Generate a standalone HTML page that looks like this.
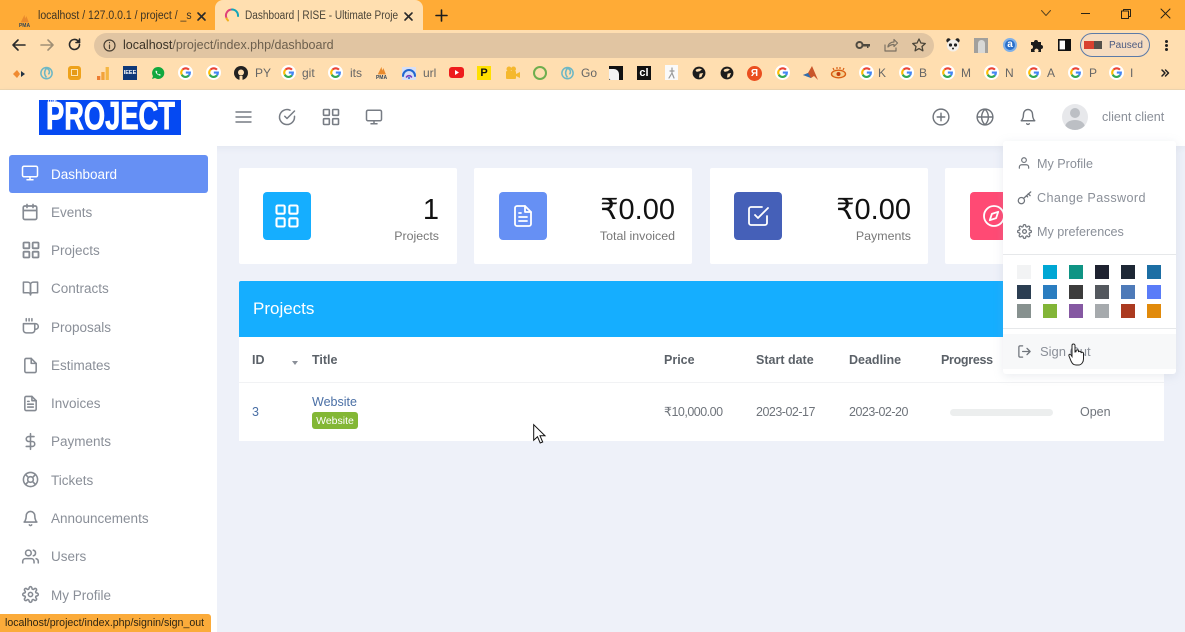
<!DOCTYPE html>
<html><head><meta charset="utf-8"><title>Dashboard | RISE</title>
<style>
*{box-sizing:border-box}
html,body{margin:0;padding:0;width:1185px;height:632px;overflow:hidden;background:#eef1f9}
body{font-family:"Liberation Sans","DejaVu Sans",sans-serif;position:relative}
#w{position:absolute;left:0;top:0;width:1185px;height:632px;overflow:hidden;filter:blur(.35px)}
.a{position:absolute}
.t{position:absolute;white-space:nowrap;line-height:18px}
svg{position:absolute;overflow:visible}
.i{fill:none;stroke-linecap:round;stroke-linejoin:round}
.n{position:absolute;left:51px;color:#8a8f98;font-size:13.5px;line-height:18px;white-space:nowrap;margin-top:1px}
.b{position:absolute;color:#666;font-size:12px;line-height:14px;white-space:nowrap;top:66px}
.s{position:absolute;width:14px;height:14px}
.c{position:absolute;top:168px;height:96px;width:218px;background:#fff;border-radius:2px}
.ic{position:absolute;top:192px;width:48px;height:48px;border-radius:4px}
.v{position:absolute;right:0;font-size:29px;line-height:34px;color:#111;white-space:nowrap}
.l{position:absolute;font-size:12.4px;line-height:16px;color:#777;white-space:nowrap}
.h{position:absolute;top:352px;font-size:12.5px;line-height:16px;font-weight:bold;color:#5b6168;white-space:nowrap}
.d{position:absolute;top:404px;font-size:12.5px;line-height:16px;color:#6f747b;white-space:nowrap}
.m{position:absolute;left:1037px;font-size:12.6px;line-height:16px;color:#8a8f98;white-space:nowrap}
.side{stroke:#858a92;stroke-width:2.2}
</style></head><body><div id="w">
<svg width="0" height="0" style="position:absolute"><defs>
<symbol id="g" viewBox="0 0 24 24"><circle cx="12" cy="12" r="12" fill="#fff"/><path d="M17.5 7.5A7 7 0 0 0 7.2 7.5" fill="none" stroke="#ea4335" stroke-width="3.4"/><path d="M7.2 7.5A7 7 0 0 0 6 15.5" fill="none" stroke="#fbbc05" stroke-width="3.4"/><path d="M6 15.5A7 7 0 0 0 17.5 16.5" fill="none" stroke="#34a853" stroke-width="3.4"/><path d="M17.5 16.5A7 7 0 0 0 19 12H12.5" fill="none" stroke="#4285f4" stroke-width="3.4"/></symbol>
<symbol id="grid" viewBox="0 0 24 24"><rect x="3" y="3" width="7" height="7" rx="1"/><rect x="14" y="3" width="7" height="7" rx="1"/><rect x="3" y="14" width="7" height="7" rx="1"/><rect x="14" y="14" width="7" height="7" rx="1"/></symbol>
<symbol id="mon" viewBox="0 0 24 24"><rect x="2" y="3" width="20" height="14" rx="2"/><path d="M8 21h8M12 17v4"/></symbol>
<symbol id="pma" viewBox="0 0 24 24"><path d="M6 15L12 3l1 6 2-4 4 10z" fill="#e98a2c"/><text x="12" y="22" font-size="8" font-weight="bold" fill="#345" text-anchor="middle" font-family="Liberation Sans">PMA</text></symbol>
<symbol id="earth" viewBox="0 0 24 24"><circle cx="12" cy="12" r="11" fill="#1c1c1c"/><path d="M6 7c4-3 8-3 11-1l-4 3-5 1zM13 13l6-1-3 7-4 1z" fill="#ffdeb0"/></symbol>
<symbol id="swirl" viewBox="0 0 24 24"><circle cx="12" cy="13" r="9" fill="none" stroke="#6cb7c5" stroke-width="2.4"/><path d="M12 5c-4 5-4 10 0 15M12 5c5 2 6 7 3 10" fill="none" stroke="#6cb7c5" stroke-width="2.4"/></symbol>
</defs></svg>

<!-- Chrome tab strip -->
<div class="a" style="left:0;top:0;width:1185px;height:30px;background:#ffab36"></div>
<div class="a" style="left:215px;top:0;width:208px;height:31px;background:#ffdfb0;border-radius:8px 8px 0 0"></div>
<svg style="left:17px;top:13px" width="15" height="15" viewBox="0 0 24 24"><use href="#pma"/></svg>
<div class="t" style="left:38px;top:7px;font-size:11.5px;color:#3c3325;transform:scaleX(.91);transform-origin:0 0">localhost / 127.0.0.1 / project / _s</div>
<svg class="i" style="left:197px;top:12px" width="9" height="9" viewBox="0 0 9 9" stroke="#2a2a2a" stroke-width="1.6"><path d="M1 1l7 7M8 1L1 8"/></svg>
<svg class="i" style="left:225px;top:8px" width="14" height="14" viewBox="0 0 14 14" stroke-width="2"><path d="M1.5 10A6 6 0 0 1 7 1.5" stroke="#e0407a"/><path d="M7 1.5A6 6 0 0 1 13 8" stroke="#12a5b8"/><path d="M1.5 10.5l1.5 2" stroke="#f0b020"/></svg>
<div class="t" style="left:245px;top:7px;font-size:11.5px;color:#4a4438;transform:scaleX(.875);transform-origin:0 0">Dashboard | RISE - Ultimate Proje</div>
<svg class="i" style="left:404px;top:12px" width="9" height="9" viewBox="0 0 9 9" stroke="#2a2a2a" stroke-width="1.6"><path d="M1 1l7 7M8 1L1 8"/></svg>
<svg class="i" style="left:436px;top:10px" width="11" height="11" viewBox="0 0 11 11" stroke="#1d1d1d" stroke-width="1.6"><path d="M5.5 0v11M0 5.5h11"/></svg>
<svg class="i" style="left:1041px;top:10px" width="10" height="6" viewBox="0 0 10 6" stroke="#5a4420" stroke-width="1"><path d="M.5.5L5 5.5 9.5.5"/></svg>
<div class="a" style="left:1081px;top:13px;width:9px;height:1.4px;background:#2a2315"></div>
<svg class="i" style="left:1121px;top:9px" width="10" height="10" viewBox="0 0 10 10" stroke="#2a2315" stroke-width="1"><rect x=".5" y="2" width="7" height="7.5"/><path d="M2.5 2V.5h7v7H7.5"/></svg>
<svg class="i" style="left:1161px;top:9px" width="9" height="9" viewBox="0 0 9 9" stroke="#2a2315" stroke-width="1"><path d="M0 0l9 9M9 0L0 9"/></svg>

<!-- Toolbar -->
<div class="a" style="left:0;top:30px;width:1185px;height:59px;background:#ffdeb0"></div>
<div class="a" style="left:0;top:89px;width:1185px;height:1px;background:#eed5ad"></div>
<svg class="i" style="left:12px;top:39px" width="13" height="12" viewBox="0 0 13 12" stroke="#2a2a2a" stroke-width="1.6"><path d="M13 6H1M6 1L1 6l5 5"/></svg>
<svg class="i" style="left:41px;top:39px" width="13" height="12" viewBox="0 0 13 12" stroke="#a08f75" stroke-width="1.6"><path d="M0 6h12M7 1l5 5-5 5"/></svg>
<svg class="i" style="left:68px;top:38px" width="13" height="13" viewBox="0 0 13 13" stroke="#2a2a2a" stroke-width="1.6"><path d="M11.5 6.5a5 5 0 1 1-1.5-3.6L11.500 4.500"/><path d="M11.5 1v3.500H8" fill="#2a2a2a"/></svg>
<div class="a" style="left:94px;top:33px;width:840px;height:25px;border-radius:13px;background:#e1c5a2"></div>
<svg class="i" style="left:103px;top:39px" width="13" height="13" viewBox="0 0 13 13" stroke="#4a4033" stroke-width="1.2"><circle cx="6.5" cy="6.5" r="5.5"/><path d="M6.5 6v3.5M6.5 3.5v.2"/></svg>
<div class="t" style="left:123px;top:36px;font-size:12.5px;color:#6c5f4d"><span style="color:#3a3226">localhost</span>/project/index.php/dashboard</div>
<svg style="left:856px;top:41px" width="14" height="9" viewBox="0 0 14 9"><circle cx="3.5" cy="4" r="3" fill="none" stroke="#4f4a40" stroke-width="2"/><path d="M6 3h8v2.500h-1.500V7H11V5.500H6z" fill="#4f4a40"/></svg>
<svg class="i" style="left:884px;top:38px" width="14" height="14" viewBox="0 0 14 14" stroke="#7c7263" stroke-width="1.2"><path d="M1 7v6h11v-3"/><path d="M4 9c0-3 3-5 6-5V1.500L13.500 5 10 8.500V6.500C7.500 6.500 5.500 7.500 4 9z"/></svg>
<svg class="i" style="left:912px;top:38px" width="14" height="14" viewBox="0 0 14 14" stroke="#4a4438" stroke-width="1.3"><path d="M7 1l1.900 4 4.400.5-3.300 3 .9 4.300L7 10.600 3.100 12.800 4 8.500 .7 5.500 5.100 5z"/></svg>
<svg style="left:946px;top:38px" width="14" height="14" viewBox="0 0 14 14"><circle cx="2.5" cy="2.5" r="2.2" fill="#222"/><circle cx="11.5" cy="2.5" r="2.2" fill="#222"/><circle cx="7" cy="7.5" r="6" fill="#f4f0ea"/><circle cx="4.5" cy="7" r="1.6" fill="#222"/><circle cx="9.5" cy="7" r="1.6" fill="#222"/><circle cx="7" cy="10.500" r="1" fill="#222"/></svg>
<div class="a" style="left:974px;top:38px;width:14px;height:15px;background:#a2a09c"></div>
<div class="a" style="left:978px;top:40px;width:7px;height:13px;background:#d8d8d6;border-radius:4px 4px 0 0"></div>
<div class="a" style="left:1003px;top:38px;width:14px;height:14px;border-radius:50%;background:#2a6fc9;border:2px solid #7fb0e8;color:#fff;font-size:10px;line-height:10px;text-align:center;font-weight:bold">a</div>
<svg style="left:1030px;top:38px" width="14" height="14" viewBox="0 0 14 14"><path d="M1 4h3a2 2 0 1 1 4 0h3v3a2 2 0 1 1 0 4v3H8a2 2 0 1 0-3 0H1v-3a2 2 0 1 0 0-4z" fill="#1c1c1c"/></svg>
<svg style="left:1058px;top:39px" width="13" height="12" viewBox="0 0 13 12"><rect x=".8" y=".8" width="11.4" height="10.4" fill="#fff" stroke="#111" stroke-width="1.6"/><rect x="7" y="1" width="5" height="10" fill="#111"/></svg>
<div class="a" style="left:1080px;top:33px;width:70px;height:24px;border-radius:12px;border:1.5px solid #5b7aa8;background:#f6dcc0"></div>
<div class="a" style="left:1084px;top:41px;width:10px;height:8px;background:#d8402e"></div>
<div class="a" style="left:1094px;top:41px;width:8px;height:8px;background:#55504a"></div>
<div class="t" style="left:1109px;top:37px;font-size:10px;color:#4b5a80">Paused</div>
<div class="a" style="left:1165px;top:40px;width:3px;height:3px;background:#222;border-radius:50%;box-shadow:0 4px 0 #222,0 8px 0 #222"></div>

<!-- Bookmarks -->
<svg style="left:12px;top:68px" width="15" height="12" viewBox="0 0 15 12"><path d="M1 6l4-4 3 4-3 4z" fill="#f08a30"/><path d="M9 3l4 3-4 3z" fill="#234"/></svg>
<svg style="left:39px;top:65px" width="15" height="15" viewBox="0 0 24 24"><use href="#swirl"/></svg>
<div class="a" style="left:68px;top:66px;width:13px;height:14px;border-radius:3px;background:#e59a16;border:3px solid #eea21b"></div>
<div class="a" style="left:71px;top:69px;width:7px;height:7px;border:1.5px solid #fde3b0"></div>
<svg style="left:97px;top:67px" width="12" height="13" viewBox="0 0 12 13"><rect x="0" y="9" width="3.3" height="4" fill="#ed7d31"/><rect x="4.3" y="5" width="3.3" height="8" fill="#f2a33a"/><rect x="8.6" y="0" width="3.3" height="13" fill="#f5b642"/></svg>
<div class="a" style="left:123px;top:66px;width:14px;height:14px;background:#0f3878;color:#fff;font-size:5.5px;line-height:14px;text-align:center;font-weight:bold">IEEE</div>
<svg style="left:151px;top:66px" width="14" height="14" viewBox="0 0 14 14"><path d="M7 1a6 6 0 0 0-5 9.200L1 13l3-1a6 6 0 1 0 3-11z" fill="#10a83e"/><path d="M5 4.500c-1 1 0 3 1.500 4S9 10 10 9l-1.500-1-.8.500C7 8.200 6 7.200 5.800 6.500l.6-.7z" fill="#fff"/></svg>
<svg style="left:178px;top:65px" width="15" height="15"><use href="#g"/></svg>
<svg style="left:206px;top:65px" width="15" height="15"><use href="#g"/></svg>
<svg style="left:234px;top:66px" width="14" height="14" viewBox="0 0 14 14"><circle cx="7" cy="7" r="7" fill="#222"/><path d="M3.500 3.500l1.500.7a6 6 0 0 1 4 0l1.500-.7.300 2c1 2 0 4-2.800 4.300L8.500 14h-3V9.800C3 9.500 2.500 7.500 3.300 5.500z" fill="#222"/><circle cx="7" cy="6.500" r="3" fill="#ffdeb0"/><path d="M5.500 10h3v4h-3z" fill="#ffdeb0"/></svg>
<div class="b" style="left:255px">PY</div>
<svg style="left:281px;top:65px" width="15" height="15"><use href="#g"/></svg>
<div class="b" style="left:302px">git</div>
<svg style="left:328px;top:65px" width="15" height="15"><use href="#g"/></svg>
<div class="b" style="left:350px">its</div>
<svg style="left:374px;top:65px" width="15" height="15" viewBox="0 0 24 24"><use href="#pma"/></svg>
<svg class="i" style="left:402px;top:67px" width="14" height="13" viewBox="0 0 14 13"><rect x="0" y="0" width="14" height="13" fill="#d7dff5" stroke="none"/><path d="M1 9a6 6 0 0 1 12 0" stroke="#2166cf" stroke-width="2"/><path d="M4.500 10a3 3 0 0 1 5 0" stroke="#7a3fc0" stroke-width="1.6"/><circle cx="7" cy="11" r="1" fill="#2166cf" stroke="none"/></svg>
<div class="b" style="left:423px">url</div>
<svg style="left:449px;top:67px" width="15" height="11" viewBox="0 0 15 11"><rect width="15" height="11" rx="3" fill="#ee1c1c"/><path d="M6 3l4 2.500L6 8z" fill="#fff"/></svg>
<div class="a" style="left:477px;top:66px;width:14px;height:14px;background:#ffe000;color:#111;font-size:11px;line-height:14px;text-align:center;font-weight:bold">P</div>
<svg style="left:505px;top:66px" width="15" height="14" viewBox="0 0 15 14"><circle cx="4" cy="3" r="2.5" fill="#f5b82e"/><circle cx="8.5" cy="3" r="2.5" fill="#f5b82e"/><rect x="1" y="5" width="10" height="8" rx="1" fill="#f5b82e"/><path d="M11 8l4-2v6l-4-2z" fill="#f5b82e"/></svg>
<div class="a" style="left:533px;top:66px;width:14px;height:14px;border-radius:50%;border:2.5px solid #6eae4e"></div>
<svg style="left:560px;top:65px" width="15" height="15" viewBox="0 0 24 24"><use href="#swirl"/></svg>
<div class="b" style="left:581px">Go</div>
<div class="a" style="left:609px;top:66px;width:14px;height:14px;background:#111"></div>
<div class="a" style="left:609px;top:69px;width:10px;height:11px;background:#f4f4f4;border-radius:0 5px 0 2px"></div>
<div class="a" style="left:637px;top:66px;width:14px;height:14px;background:#111;color:#fff;font-size:11px;line-height:14px;text-align:center;font-weight:bold">cl</div>
<div class="a" style="left:665px;top:65px;width:13px;height:15px;background:#fafafa"></div>
<svg class="i" style="left:668px;top:67px" width="7" height="12" viewBox="0 0 7 12" stroke="#999" stroke-width="1.2"><path d="M4 1v5L1 11M4 6l2 5M2 4h4"/></svg>
<svg style="left:692px;top:66px" width="14" height="14" viewBox="0 0 24 24"><use href="#earth"/></svg>
<svg style="left:720px;top:66px" width="14" height="14" viewBox="0 0 24 24"><use href="#earth"/></svg>
<div class="a" style="left:747px;top:66px;width:15px;height:15px;border-radius:50%;background:#ea4e1f;color:#fff;font-size:10px;line-height:15px;text-align:center;font-weight:bold">Я</div>
<svg style="left:775px;top:65px" width="15" height="15"><use href="#g"/></svg>
<svg style="left:803px;top:66px" width="15" height="14" viewBox="0 0 15 14"><path d="M0 9l5-2 4-7 6 14-4-4-3 2z" fill="#c9552a"/><path d="M0 9l5-2 3 5z" fill="#2f6fb0"/></svg>
<svg style="left:831px;top:67px" width="15" height="12" viewBox="0 0 15 12"><ellipse cx="7.5" cy="7" rx="7" ry="3.8" fill="#f6d090" stroke="#d95f12" stroke-width="1.4"/><circle cx="7.5" cy="7" r="2" fill="#c6400f"/><path d="M3 3L2 1M6 2V0M9 2V0M12 3l1-2" stroke="#d95f12" stroke-width="1.2"/></svg>
<svg style="left:859px;top:65px" width="15" height="15"><use href="#g"/></svg><div class="b" style="left:878px">K</div>
<svg style="left:899px;top:65px" width="15" height="15"><use href="#g"/></svg><div class="b" style="left:919px">B</div>
<svg style="left:940px;top:65px" width="15" height="15"><use href="#g"/></svg><div class="b" style="left:961px">M</div>
<svg style="left:984px;top:65px" width="15" height="15"><use href="#g"/></svg><div class="b" style="left:1005px">N</div>
<svg style="left:1026px;top:65px" width="15" height="15"><use href="#g"/></svg><div class="b" style="left:1047px">A</div>
<svg style="left:1068px;top:65px" width="15" height="15"><use href="#g"/></svg><div class="b" style="left:1089px">P</div>
<svg style="left:1109px;top:65px" width="15" height="15"><use href="#g"/></svg><div class="b" style="left:1130px">I</div>
<svg class="i" style="left:1161px;top:69px" width="8" height="8" viewBox="0 0 8 8" stroke="#222" stroke-width="1.5"><path d="M1 1l3 3-3 3M4.5 1l3 3-3 3"/></svg>

<!-- App header -->
<div class="a" style="left:0;top:90px;width:1185px;height:56px;background:#fff;box-shadow:0 2px 6px rgba(160,170,190,.14)"></div>
<div class="a" style="left:39px;top:100px;width:142px;height:35px;background:#0549f2"></div>
<div class="t" style="left:46px;top:97px;font-size:39px;line-height:40px;font-weight:bold;color:#fff;-webkit-text-stroke:.9px #fff;transform:scaleX(.7);transform-origin:0 0">PROJECT</div>
<div class="t" style="left:47px;top:98px;font-size:5px;line-height:6px;font-weight:bold;color:#fff">THE</div>
<svg class="i" style="left:236px;top:111px" width="15" height="12" viewBox="0 0 15 12" stroke="#777c84" stroke-width="1.4"><path d="M0 1h15M0 6h15M0 11h15"/></svg>
<svg class="i" style="left:278px;top:108px" width="18" height="18" viewBox="0 0 24 24" stroke="#777c84" stroke-width="2"><path d="M22 11v1a10 10 0 1 1-6-9.100"/><path d="M22 4L12 14l-3-3"/></svg>
<svg class="i" style="left:321px;top:107px" width="20" height="20" viewBox="0 0 24 24" stroke="#777c84" stroke-width="1.9"><use href="#grid"/></svg>
<svg class="i" style="left:365px;top:108px" width="18" height="18" viewBox="0 0 24 24" stroke="#777c84" stroke-width="2"><use href="#mon"/></svg>
<svg class="i" style="left:932px;top:108px" width="18" height="18" viewBox="0 0 24 24" stroke="#6f747b" stroke-width="1.9"><circle cx="12" cy="12" r="10.5"/><path d="M12 7v10M7 12h10"/></svg>
<svg class="i" style="left:976px;top:108px" width="18" height="18" viewBox="0 0 24 24" stroke="#6f747b" stroke-width="1.9"><circle cx="12" cy="12" r="10.5"/><path d="M1.500 12h21M12 1.500c-6 6-6 15 0 21M12 1.500c6 6 6 15 0 21"/></svg>
<svg class="i" style="left:1019px;top:108px" width="18" height="18" viewBox="0 0 24 24" stroke="#6f747b" stroke-width="1.9"><path d="M18 8a6 6 0 0 0-12 0c0 7-3 9-3 9h18s-3-2-3-9"/><path d="M13.700 21a2 2 0 0 1-3.400 0"/></svg>
<div class="a" style="left:1062px;top:104px;width:26px;height:26px;border-radius:50%;background:#e7e8eb;overflow:hidden"><div class="a" style="left:8px;top:4px;width:10px;height:10px;border-radius:50%;background:#bcbfc4"></div><div class="a" style="left:3px;top:16px;width:20px;height:14px;border-radius:50%;background:#bcbfc4"></div></div>
<div class="t" style="left:1102px;top:108px;font-size:12.6px;color:#8a8f98">client client</div>

<!-- Sidebar -->
<div class="a" style="left:0;top:146px;width:217px;height:486px;background:#fff"></div>
<div class="a" style="left:9px;top:155px;width:199px;height:38px;background:#6690f4;border-radius:3px"></div>
<svg class="i" style="left:21px;top:164px" width="18" height="18" viewBox="0 0 24 24" stroke="#fff" stroke-width="2"><use href="#mon"/></svg>
<div class="n" style="top:165px;color:#fff">Dashboard</div>
<svg class="i side" style="left:21px;top:203px" width="18" height="18" viewBox="0 0 24 24"><rect x="3" y="4" width="18" height="18" rx="2"/><path d="M16 2v4M8 2v4M3 10h18"/></svg>
<div class="n" style="top:203px">Events</div>
<svg class="i side" style="left:21px;top:240px" width="20" height="20" viewBox="0 0 24 24"><use href="#grid"/></svg>
<div class="n" style="top:241px">Projects</div>
<svg class="i side" style="left:22px;top:280px" width="17" height="17" viewBox="0 0 24 24"><path d="M2 3h6a4 4 0 0 1 4 4v14a3 3 0 0 0-3-3H2z"/><path d="M22 3h-6a4 4 0 0 0-4 4v14a3 3 0 0 1 3-3h7z"/></svg>
<div class="n" style="top:279px">Contracts</div>
<svg class="i side" style="left:22px;top:318px" width="17" height="17" viewBox="0 0 24 24"><path d="M18 8h1a4 4 0 0 1 0 8h-1"/><path d="M2 8h16v9a4 4 0 0 1-4 4H6a4 4 0 0 1-4-4z"/><path d="M6 1v3M10 1v3M14 1v3"/></svg>
<div class="n" style="top:318px">Proposals</div>
<svg class="i side" style="left:22px;top:357px" width="17" height="17" viewBox="0 0 24 24"><path d="M13 2H6a2 2 0 0 0-2 2v16a2 2 0 0 0 2 2h12a2 2 0 0 0 2-2V9z"/><path d="M13 2v7h7"/></svg>
<div class="n" style="top:356px">Estimates</div>
<svg class="i side" style="left:22px;top:395px" width="17" height="17" viewBox="0 0 24 24"><path d="M14 2H6a2 2 0 0 0-2 2v16a2 2 0 0 0 2 2h12a2 2 0 0 0 2-2V8z"/><path d="M14 2v6h6M16 13H8M16 17H8M10 9H8"/></svg>
<div class="n" style="top:394px">Invoices</div>
<svg class="i side" style="left:22px;top:433px" width="17" height="17" viewBox="0 0 24 24"><path d="M12 1v22M17 5H9.500a3.500 3.500 0 0 0 0 7h5a3.500 3.500 0 0 1 0 7H6"/></svg>
<div class="n" style="top:432px">Payments</div>
<svg class="i side" style="left:22px;top:471px" width="17" height="17" viewBox="0 0 24 24"><circle cx="12" cy="12" r="10"/><circle cx="12" cy="12" r="4"/><path d="M4.900 4.900l4.300 4.300M14.800 14.800l4.300 4.300M14.800 9.200l4.300-4.300M4.900 19.100l4.300-4.300"/></svg>
<div class="n" style="top:471px">Tickets</div>
<svg class="i side" style="left:22px;top:510px" width="17" height="17" viewBox="0 0 24 24"><path d="M18 8a6 6 0 0 0-12 0c0 7-3 9-3 9h18s-3-2-3-9"/><path d="M13.700 21a2 2 0 0 1-3.400 0"/></svg>
<div class="n" style="top:509px">Announcements</div>
<svg class="i side" style="left:22px;top:548px" width="17" height="17" viewBox="0 0 24 24"><path d="M17 21v-2a4 4 0 0 0-4-4H5a4 4 0 0 0-4 4v2"/><circle cx="9" cy="7" r="4"/><path d="M23 21v-2a4 4 0 0 0-3-3.900M16 3.100a4 4 0 0 1 0 7.800"/></svg>
<div class="n" style="top:547px">Users</div>
<svg class="i side" style="left:22px;top:586px" width="17" height="17" viewBox="0 0 24 24"><circle cx="12" cy="12" r="3"/><path d="M19.400 15a1.700 1.700 0 0 0 .3 1.800l.1.100a2 2 0 1 1-2.800 2.800l-.1-.1a1.700 1.700 0 0 0-2.900 1.200V21a2 2 0 1 1-4 0v-.1a1.700 1.700 0 0 0-2.900-1.200l-.1.100a2 2 0 1 1-2.800-2.800l.1-.1a1.700 1.700 0 0 0-1.200-2.900H3a2 2 0 1 1 0-4h.1a1.700 1.700 0 0 0 1.200-2.900l-.1-.1a2 2 0 1 1 2.800-2.800l.1.100a1.700 1.700 0 0 0 2.900-1.200V3a2 2 0 1 1 4 0v.1a1.700 1.700 0 0 0 2.900 1.200l.1-.1a2 2 0 1 1 2.800 2.800l-.1.100a1.700 1.700 0 0 0 1.200 2.900h.1a2 2 0 1 1 0 4h-.1a1.700 1.700 0 0 0-1.500 1z"/></svg>
<div class="n" style="top:586px">My Profile</div>

<!-- Cards -->
<div class="c" style="left:239px"></div><div class="c" style="left:474px"></div><div class="c" style="left:710px"></div><div class="c" style="left:945px"></div>
<div class="ic" style="left:263px;background:#15aeff"></div>
<svg class="i" style="left:273px;top:202px" width="28" height="28" viewBox="0 0 24 24" stroke="#fff" stroke-width="1.800"><use href="#grid"/></svg>
<div class="ic" style="left:499px;background:#6690f4"></div>
<svg class="i" style="left:511px;top:204px" width="24" height="24" viewBox="0 0 24 24" stroke="#fff" stroke-width="1.8"><path d="M14 2H6a2 2 0 0 0-2 2v16a2 2 0 0 0 2 2h12a2 2 0 0 0 2-2V8z"/><path d="M14 2v6h6M16 13H8M16 17H8M10 9H8"/></svg>
<div class="ic" style="left:734px;background:#4560b8"></div>
<svg class="i" style="left:746px;top:204px" width="24" height="24" viewBox="0 0 24 24" stroke="#fff" stroke-width="1.8"><path d="M9 11l3 3L22 4"/><path d="M21 12v7a2 2 0 0 1-2 2H5a2 2 0 0 1-2-2V5a2 2 0 0 1 2-2h11"/></svg>
<div class="ic" style="left:970px;background:#ff4a74"></div>
<svg class="i" style="left:982px;top:204px" width="24" height="24" viewBox="0 0 24 24" stroke="#fff" stroke-width="1.8"><circle cx="12" cy="12" r="10"/><path d="M16.200 7.800l-2.100 6.300-6.300 2.100 2.100-6.300z"/></svg>
<div class="v" style="left:239px;top:193px;width:200px;text-align:right">1</div>
<div class="l" style="left:239px;top:228px;width:200px;text-align:right">Projects</div>
<div class="v" style="left:474px;top:193px;width:201px;text-align:right">₹0.00</div>
<div class="l" style="left:474px;top:228px;width:201px;text-align:right">Total invoiced</div>
<div class="v" style="left:710px;top:193px;width:201px;text-align:right">₹0.00</div>
<div class="l" style="left:710px;top:228px;width:201px;text-align:right">Payments</div>

<!-- Panel -->
<div class="a" style="left:239px;top:281px;width:925px;height:56px;background:#15aeff;border-radius:2px 2px 0 0"></div>
<div class="t" style="left:253px;top:299px;font-size:17px;line-height:20px;color:#fff">Projects</div>
<div class="a" style="left:239px;top:337px;width:925px;height:104px;background:#fff"></div>
<div class="a" style="left:239px;top:382px;width:925px;height:1px;background:#f1f2f4"></div>
<div class="h" style="left:252px">ID</div>
<div class="a" style="left:292px;top:361px;border:3.5px solid transparent;border-top:4px solid #8a8f98;border-bottom:0"></div>
<div class="h" style="left:312px">Title</div>
<div class="h" style="left:664px">Price</div>
<div class="h" style="left:756px">Start date</div>
<div class="h" style="left:849px">Deadline</div>
<div class="h" style="left:941px;letter-spacing:-.3px">Progress</div>
<div class="d" style="left:252px;color:#4a6fa5">3</div>
<div class="t" style="left:312px;top:393px;font-size:12.5px;color:#4a6fa5">Website</div>
<div class="a" style="left:312px;top:412px;width:46px;height:17px;background:#83b735;border-radius:3px;color:#fff;font-size:10.5px;line-height:18px;text-align:center">Website</div>
<div class="d" style="left:664px;letter-spacing:-.5px">₹10,000.00</div>
<div class="d" style="left:756px;letter-spacing:-.5px">2023-02-17</div>
<div class="d" style="left:849px;letter-spacing:-.5px">2023-02-20</div>
<div class="a" style="left:950px;top:409px;width:103px;height:7px;border-radius:4px;background:#eceeee"></div>
<div class="d" style="left:1080px">Open</div>

<!-- Dropdown -->
<div class="a" style="left:1003px;top:141px;width:173px;height:233px;background:#fff;border-radius:3px;box-shadow:0 2px 10px rgba(150,160,180,.2)"></div>
<svg class="i" style="left:1017px;top:156px" width="14" height="14" viewBox="0 0 24 24" stroke="#6f747b" stroke-width="2"><path d="M20 21v-2a4 4 0 0 0-4-4H8a4 4 0 0 0-4 4v2"/><circle cx="12" cy="7" r="4"/></svg>
<div class="m" style="top:156px">My Profile</div>
<svg class="i" style="left:1017px;top:190px" width="15" height="15" viewBox="0 0 24 24" stroke="#6f747b" stroke-width="2"><circle cx="7" cy="17" r="5"/><path d="M11 13L22 3M18 6l3 3M15 9l2 2"/></svg>
<div class="m" style="top:190px;font-size:12.6px;letter-spacing:.4px">Change Password</div>
<svg class="i" style="left:1017px;top:224px" width="15" height="15" viewBox="0 0 24 24" stroke="#6f747b" stroke-width="2"><circle cx="12" cy="12" r="3"/><path d="M19.400 15a1.700 1.700 0 0 0 .3 1.800l.1.100a2 2 0 1 1-2.800 2.800l-.1-.1a1.700 1.700 0 0 0-2.900 1.200V21a2 2 0 1 1-4 0v-.1a1.700 1.700 0 0 0-2.900-1.200l-.1.100a2 2 0 1 1-2.800-2.800l.1-.1a1.700 1.700 0 0 0-1.200-2.900H3a2 2 0 1 1 0-4h.1a1.700 1.700 0 0 0 1.200-2.900l-.1-.1a2 2 0 1 1 2.800-2.800l.1.100a1.700 1.700 0 0 0 2.900-1.200V3a2 2 0 1 1 4 0v.1a1.700 1.700 0 0 0 2.900 1.200l.1-.1a2 2 0 1 1 2.800 2.800l-.1.100a1.700 1.700 0 0 0 1.200 2.900h.1a2 2 0 1 1 0 4h-.1a1.700 1.700 0 0 0-1.500 1z"/></svg>
<div class="m" style="top:224px">My preferences</div>
<div class="a" style="left:1003px;top:254px;width:173px;height:1px;background:#e6e8ea"></div>
<div class="s" style="left:1017px;top:265px;background:#f2f3f4"></div><div class="s" style="left:1043px;top:265px;background:#00a7d4"></div><div class="s" style="left:1069px;top:265px;background:#0f9484"></div><div class="s" style="left:1095px;top:265px;background:#1e2230"></div><div class="s" style="left:1121px;top:265px;background:#1d2735"></div><div class="s" style="left:1147px;top:265px;background:#1c6ea4"></div>
<div class="s" style="left:1017px;top:285px;background:#2b3e52"></div><div class="s" style="left:1043px;top:285px;background:#2a7dc0"></div><div class="s" style="left:1069px;top:285px;background:#3c3c3c"></div><div class="s" style="left:1095px;top:285px;background:#54585e"></div><div class="s" style="left:1121px;top:285px;background:#4e7ab8"></div><div class="s" style="left:1147px;top:285px;background:#5a7cf8"></div>
<div class="s" style="left:1017px;top:304px;background:#87918f"></div><div class="s" style="left:1043px;top:304px;background:#82b537"></div><div class="s" style="left:1069px;top:304px;background:#8558a2"></div><div class="s" style="left:1095px;top:304px;background:#a6aaad"></div><div class="s" style="left:1121px;top:304px;background:#ab3a20"></div><div class="s" style="left:1147px;top:304px;background:#e18a0b"></div>
<div class="a" style="left:1003px;top:328px;width:173px;height:1px;background:#e6e8ea"></div>
<div class="a" style="left:1003px;top:334px;width:173px;height:35px;background:#f7f8f9"></div>
<svg class="i" style="left:1017px;top:344px" width="15" height="15" viewBox="0 0 24 24" stroke="#6f747b" stroke-width="2"><path d="M9 21H5a2 2 0 0 1-2-2V5a2 2 0 0 1 2-2h4M16 17l5-5-5-5M21 12H9"/></svg>
<div class="m" style="left:1040px;top:344px;font-size:13px">Sign Out</div>

<!-- Cursors -->
<svg style="left:1068px;top:343px" width="17" height="23" viewBox="0 0 17 23"><path d="M4 2.500a1.500 1.500 0 0 1 3 0V9l1-.3v-1a1.400 1.400 0 0 1 2.500 0v1.300a1.400 1.400 0 0 1 2.500 0v1a1.300 1.300 0 0 1 2.500 .5V16c0 3-2 6-5 6H8c-3 0-4-2-5-4L1 13c-.500-1.500 1.200-2.500 2-1l1 1.500z" fill="#fff" stroke="#222" stroke-width="1"/></svg>
<svg style="left:533px;top:424px" width="13" height="20" viewBox="0 0 13 20"><path d="M.7.700v15.500l3.800-3.500 2.700 6.300 2.500-1-2.700-6.200h5z" fill="#fff" stroke="#111" stroke-width="1"/></svg>

<!-- Status bubble -->
<div class="a" style="left:0;top:614px;width:211px;height:18px;background:#fbab3a;border-radius:0 3px 0 0"></div>
<div class="t" style="left:5px;top:615px;font-size:10.6px;line-height:16px;color:#2e2512">localhost/project/index.php/signin/sign_out</div>
</div></body></html>
